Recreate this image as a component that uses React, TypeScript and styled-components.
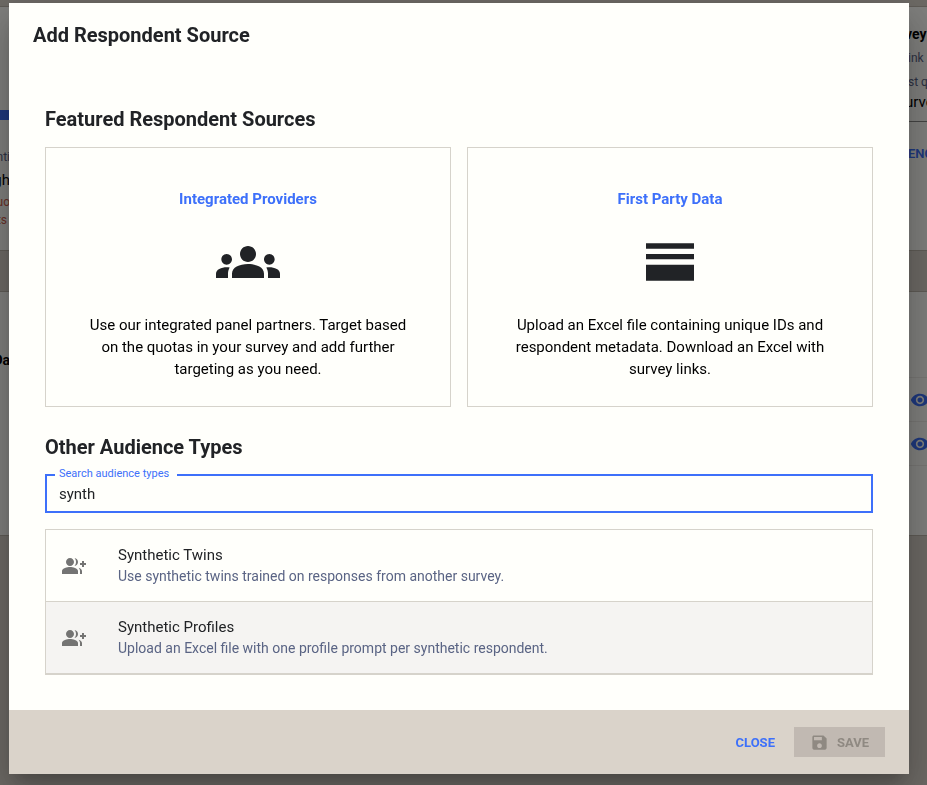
import React, { useState } from "react";
import styled, { createGlobalStyle } from "styled-components";

const color = {
  paper: "#fffffb",
  sand: "#dad3ca",
  line: "#d6d3cb",
  ink: "#212326",
  blue: "#3d70fa",
  slate: "#5a6484",
};

const GlobalStyle = createGlobalStyle`
  *, *::before, *::after { box-sizing: border-box; }
  body {
    margin: 0;
    background: ${color.sand};
    color: ${color.ink};
    font-family: Roboto, "Liberation Sans", sans-serif;
    overflow: hidden;
  }
  h1, h2, h3, p, ul { margin: 0; padding: 0; }
  button, input { font-family: inherit; }
`;

/* ---------- page behind the dialog ---------- */

const Page = styled.main`
  display: flex;
  flex-direction: column;
  gap: 40px;
  padding-top: 6px;
`;

const Panel = styled.section`
  display: flex;
  justify-content: space-between;
  height: 245px;
  overflow: hidden;
  background: ${color.paper};
  border: solid #bfb8ad;
  border-width: 1px 0;
`;

const LeftEdge = styled.div`
  display: flex;
  flex-direction: column;
  align-items: flex-end;
  width: 10px;
  white-space: nowrap;
`;

const RightEdge = styled.div`
  display: flex;
  flex-direction: column;
  width: 22px;
  white-space: nowrap;
`;

const ProgressBar = styled.div`
  width: 10px;
  height: 10px;
  margin: 103px 0 27px;
  background: ${color.blue};
`;

const PageText = styled.span<{ $size: number; $line: number; $color?: string; $bold?: boolean }>`
  font-size: ${(p) => p.$size}px;
  line-height: ${(p) => p.$line}px;
  color: ${(p) => p.$color ?? "#000"};
  font-weight: ${(p) => (p.$bold ? 700 : 400)};
`;

const RightDetails = styled.div`
  display: flex;
  flex-direction: column;
  padding-top: 15px;
  height: 115px;
  border-bottom: 1px solid #8a8a88;
`;

const PageAction = styled.button`
  margin: 20px 0 0 3px;
  padding: 0;
  border: 0;
  background: none;
  color: ${color.blue};
  font-size: 13px;
  font-weight: 600;
  line-height: 24px;
  text-align: left;
`;

const TableHead = styled.div`
  height: 85px;
  padding-top: 56px;
`;

const TableRow = styled.div`
  display: flex;
  align-items: center;
  height: 44px;
  padding-left: 5px;
  border-top: 1px solid #efede8;
`;

/* ---------- dialog ---------- */

const Backdrop = styled.div`
  position: fixed;
  inset: 0;
  overflow: hidden;
  padding: 3px 18px 11px 9px;
  background: rgba(0, 0, 0, 0.5);
`;

const Dialog = styled.div`
  display: flex;
  flex-direction: column;
  background: ${color.paper};
  box-shadow:
    0 11px 15px -7px rgba(0, 0, 0, 0.2),
    0 24px 38px 3px rgba(0, 0, 0, 0.14),
    0 9px 46px 8px rgba(0, 0, 0, 0.12);
`;

const DialogTitle = styled.h1`
  padding: 16px 24px;
  font-size: 20px;
  font-weight: 700;
  line-height: 32px;
`;

const DialogBody = styled.div`
  display: flex;
  flex-direction: column;
  padding: 36px 36px 35px;
`;

const SectionTitle = styled.h2`
  font-size: 20px;
  font-weight: 700;
  line-height: 32px;
`;

const CardGrid = styled.div`
  display: grid;
  grid-template-columns: 1fr 1fr;
  gap: 16px;
  margin: 12px 0 24px;
`;

const Card = styled.button`
  display: flex;
  flex-direction: column;
  align-items: center;
  gap: 20px;
  padding: 40px 36px 26px;
  border: 1px solid ${color.line};
  background: none;
  color: ${color.ink};
  cursor: pointer;
`;

const CardTitle = styled.span`
  color: ${color.blue};
  font-size: 15px;
  font-weight: 700;
  line-height: 22px;
`;

const CardText = styled.span`
  color: #000;
  font-size: 15px;
  line-height: 22px;
  text-align: center;
`;

const Field = styled.div`
  position: relative;
  margin: 11px 0 16px;
`;

const FieldLabel = styled.label`
  position: absolute;
  top: -8px;
  left: 10px;
  padding: 0 8px 0 4px;
  background: ${color.paper};
  color: ${color.blue};
  font-size: 11px;
  line-height: 16px;
`;

const FieldInput = styled.input`
  display: block;
  width: 100%;
  height: 39px;
  padding: 0 12px;
  border: 2px solid ${color.blue};
  border-radius: 0;
  outline: 0;
  background: transparent;
  color: ${color.ink};
  font-size: 15px;
`;

const List = styled.ul`
  list-style: none;
  border: 1px solid ${color.line};
`;

const ListButton = styled.button<{ $hovered?: boolean }>`
  display: flex;
  align-items: center;
  gap: 32px;
  width: 100%;
  padding: 14px 16px;
  border: 0;
  border-bottom: 1px solid ${color.line};
  background: ${(p) => (p.$hovered ? "#f5f4f2" : "transparent")};
  color: #747473;
  text-align: left;
  cursor: pointer;
`;

const ListText = styled.span`
  display: flex;
  flex-direction: column;
`;

const ListName = styled.span`
  color: ${color.ink};
  font-size: 15px;
  line-height: 22px;
`;

const ListNote = styled.span`
  color: ${color.slate};
  font-size: 14px;
  line-height: 21px;
`;

const DialogFooter = styled.footer`
  display: flex;
  align-items: center;
  justify-content: flex-end;
  gap: 8px;
  min-height: 64px;
  padding: 0 24px;
  background: ${color.sand};
`;

const FooterButton = styled.button<{ $filled?: boolean }>`
  display: flex;
  align-items: center;
  gap: 8px;
  height: 30px;
  padding: 0 ${(p) => (p.$filled ? 16 : 11)}px;
  border: 0;
  background: ${(p) => (p.$filled ? "#c1b9b2" : "none")};
  color: ${(p) => (p.$filled ? "#8f8982" : color.blue)};
  font-size: 13px;
  font-weight: 700;
  text-transform: uppercase;
`;

/* ---------- icons ---------- */

const paths = {
  groups:
    "M12 12.75c1.63 0 3.07.39 4.24.9 1.08.48 1.76 1.56 1.76 2.73V18H6v-1.61c0-1.18.68-2.26 1.76-2.73 1.17-.52 2.61-.91 4.24-.91M4 13c1.1 0 2-.9 2-2s-.9-2-2-2-2 .9-2 2 .9 2 2 2m1.13 1.1c-.37-.06-.74-.1-1.13-.1-.99 0-1.93.21-2.78.58C.48 14.9 0 15.62 0 16.43V18h4.5v-1.61c0-.83.23-1.61.63-2.29M20 13c1.1 0 2-.9 2-2s-.9-2-2-2-2 .9-2 2 .9 2 2 2m4 3.43c0-.81-.48-1.53-1.22-1.85-.85-.37-1.79-.58-2.78-.58-.39 0-.76.04-1.13.1.4.68.63 1.46.63 2.29V18H24zM12 6c1.66 0 3 1.34 3 3s-1.34 3-3 3-3-1.34-3-3 1.34-3 3-3",
  split: "M3 19h18v-6H3zm0-8h18V9H3zm0-6v2h18V5z",
  groupAdd:
    "M22 9V7h-2v2h-2v2h2v2h2v-2h2V9zM8 12c2.21 0 4-1.79 4-4s-1.79-4-4-4-4 1.79-4 4 1.79 4 4 4m0 1c-2.67 0-8 1.34-8 4v3h16v-3c0-2.66-5.33-4-8-4m4.51-8.95C13.43 5.11 14 6.49 14 8s-.57 2.89-1.49 3.95C14.47 11.7 16 10.04 16 8s-1.53-3.7-3.49-3.95m4.02 9.78C17.42 14.66 18 15.7 18 17v3h2v-3c0-1.45-1.59-2.51-3.47-3.17",
  save: "M17 3H5c-1.11 0-2 .9-2 2v14c0 1.1.89 2 2 2h14c1.1 0 2-.9 2-2V7zm-5 16c-1.66 0-3-1.34-3-3s1.34-3 3-3 3 1.34 3 3-1.34 3-3 3m3-10H5V5h10z",
  eye: "M12 4.5C7 4.5 2.73 7.61 1 12c1.73 4.39 6 7.5 11 7.5s9.27-3.11 11-7.5c-1.73-4.39-6-7.5-11-7.5M12 17c-2.76 0-5-2.24-5-5s2.24-5 5-5 5 2.24 5 5-2.24 5-5 5m0-8c-1.66 0-3 1.34-3 3s1.34 3 3 3 3-1.34 3-3-1.34-3-3-3",
};

const Svg = styled.svg<{ $blue?: boolean }>`
  flex-shrink: 0;
  fill: ${(p) => (p.$blue ? color.blue : "currentColor")};
`;

function Icon({ name, size, blue }: { name: keyof typeof paths; size: number; blue?: boolean }) {
  return (
    <Svg viewBox="0 0 24 24" width={size} height={size} $blue={blue} aria-hidden="true">
      <path d={paths[name]} />
    </Svg>
  );
}

const featured = [
  {
    title: "Integrated Providers",
    icon: "groups",
    text: "Use our integrated panel partners. Target based on the quotas in your survey and add further targeting as you need.",
  },
  {
    title: "First Party Data",
    icon: "split",
    text: "Upload an Excel file containing unique IDs and respondent metadata. Download an Excel with survey links.",
  },
] as const;

const audiences = [
  { name: "Synthetic Twins", note: "Use synthetic twins trained on responses from another survey." },
  { name: "Synthetic Profiles", note: "Upload an Excel file with one profile prompt per synthetic respondent." },
];

function SurveyPage() {
  return (
    <Page aria-hidden="true">
      <Panel>
        <LeftEdge>
          <ProgressBar />
          <PageText $size={12} $line={20} $color={color.slate}>nti</PageText>
          <PageText $size={15} $line={26}>gh</PageText>
          <PageText $size={12} $line={18} $color="#d0604c">uo</PageText>
          <PageText $size={12} $line={18} $color="#d0604c">ts&nbsp;</PageText>
        </LeftEdge>
        <RightEdge>
          <RightDetails>
            <PageText $size={14} $line={24} $bold>vey</PageText>
            <PageText $size={12} $line={24} $color={color.slate}>&nbsp;ink</PageText>
            <PageText $size={12} $line={24} $color={color.slate}>&nbsp;st q</PageText>
            <PageText $size={15} $line={16}>urve</PageText>
          </RightDetails>
          <PageAction type="button" tabIndex={-1}>ENC</PageAction>
        </RightEdge>
      </Panel>
      <Panel>
        <LeftEdge>
          <TableHead>
            <PageText $size={14} $line={24} $bold>Da</PageText>
          </TableHead>
        </LeftEdge>
        <RightEdge>
          <TableHead />
          <TableRow><Icon name="eye" size={20} blue /></TableRow>
          <TableRow><Icon name="eye" size={20} blue /></TableRow>
          <TableRow />
        </RightEdge>
      </Panel>
    </Page>
  );
}

export default function App() {
  const [query, setQuery] = useState("synth");
  const shown = audiences.filter((a) => a.name.toLowerCase().includes(query.toLowerCase()));

  return (
    <>
      <GlobalStyle />
      <SurveyPage />
      <Backdrop>
        <Dialog role="dialog" aria-modal="true" aria-labelledby="dialog-title">
          <DialogTitle id="dialog-title">Add Respondent Source</DialogTitle>
          <DialogBody>
            <SectionTitle>Featured Respondent Sources</SectionTitle>
            <CardGrid>
              {featured.map((f) => (
                <Card key={f.title} type="button">
                  <CardTitle>{f.title}</CardTitle>
                  <Icon name={f.icon} size={64} />
                  <CardText>{f.text}</CardText>
                </Card>
              ))}
            </CardGrid>
            <SectionTitle>Other Audience Types</SectionTitle>
            <Field>
              <FieldInput id="audience-search" value={query} onChange={(e) => setQuery(e.target.value)} />
              <FieldLabel htmlFor="audience-search">Search audience types</FieldLabel>
            </Field>
            <List>
              {shown.map((a) => (
                <li key={a.name}>
                  <ListButton type="button" $hovered={a.name === "Synthetic Profiles"}>
                    <Icon name="groupAdd" size={24} />
                    <ListText>
                      <ListName>{a.name}</ListName>
                      <ListNote>{a.note}</ListNote>
                    </ListText>
                  </ListButton>
                </li>
              ))}
            </List>
          </DialogBody>
          <DialogFooter>
            <FooterButton type="button">Close</FooterButton>
            <FooterButton type="button" $filled disabled>
              <Icon name="save" size={19} />
              Save
            </FooterButton>
          </DialogFooter>
        </Dialog>
      </Backdrop>
    </>
  );
}
